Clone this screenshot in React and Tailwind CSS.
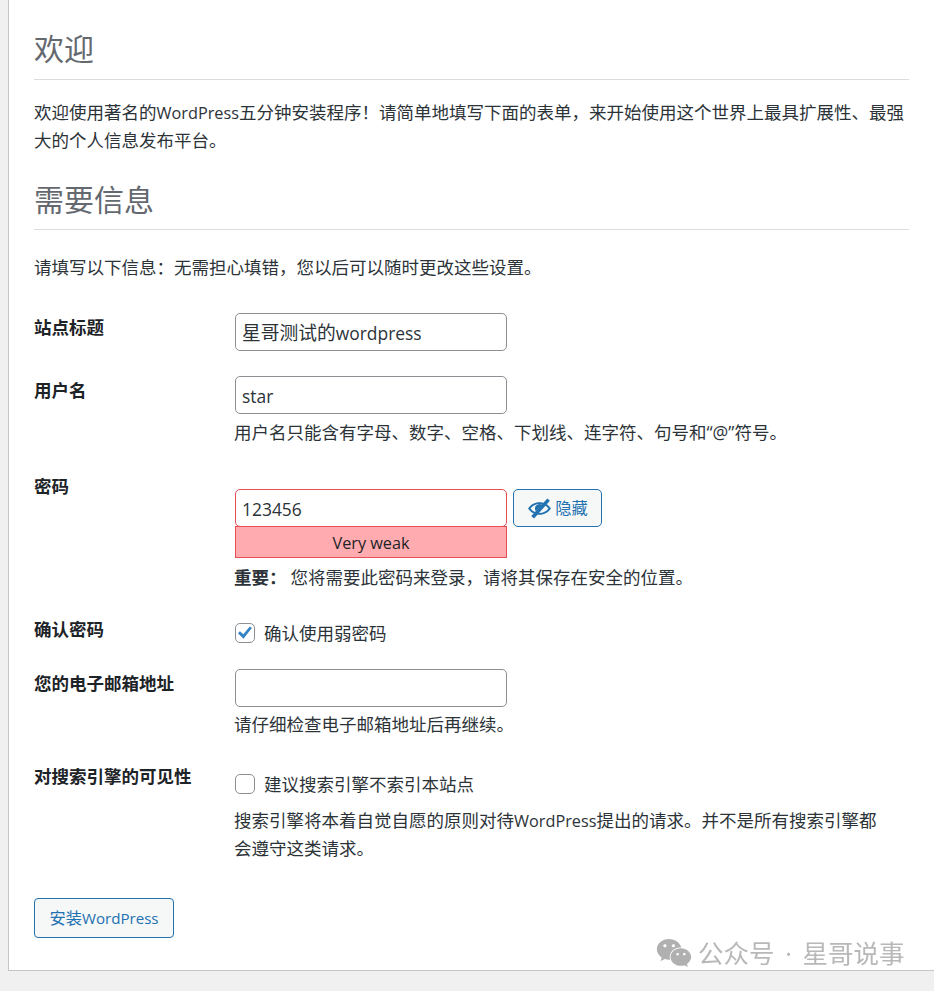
import { FaWeixin } from 'react-icons/fa';

// Latin runs sit a bit smaller than the CJK around them
function L({ children }) {
  return <span className="text-[0.93em]">{children}</span>;
}

function Row({ label, className = '', labelClass = '', children }) {
  return (
    <div className={`grid grid-cols-[200px_1fr] ${className}`}>
      <div className={`font-semibold text-[17.5px] leading-[26px] text-[#1d2327] ${labelClass}`}>{label}</div>
      <div>{children}</div>
    </div>
  );
}

function TextBox({ children, danger }) {
  return (
    <div className={`w-[272px] h-[38px] ml-px bg-white border rounded-[5px] px-[6px] text-[18.75px] leading-[37px] text-[#2c3338] ${danger ? 'border-[#e65054]' : 'border-[#8c8f94]'}`}>
      {children}
    </div>
  );
}

function Checkbox({ checked }) {
  return (
    <span className="flex items-center justify-center w-5 h-5 ml-px border border-[#8c8f94] rounded-[5px] bg-white shrink-0">
      {checked && (
        <svg viewBox="0 0 20 20" className="w-5 h-5 shrink-0">
          <path d="M3 10.200 L4.900 8.200 L8.300 11.300 L14.800 3.400 L16.900 5 L8.500 15.800 Z" fill="#3582c4" />
        </svg>
      )}
    </span>
  );
}

function EyeSlash() {
  return (
    <svg viewBox="0 0 24 24" className="w-[25px] h-[25px]" fill="#2271b1">
      <path
        fillRule="evenodd"
        d="M12 6c4.600 0 8.700 2.400 11 6-2.300 3.600-6.400 6-11 6S3.300 15.600 1 12C3.300 8.400 7.400 6 12 6Zm0 1.700c-3.400 0-6.500 1.600-8.600 4.300 2.100 2.700 5.200 4.300 8.600 4.300s6.500-1.600 8.600-4.300C18.500 9.300 15.400 7.700 12 7.700Z"
      />
      <path d="M12 7.600a4.400 4.400 0 0 1 2.600.8l-6 6.300A4.400 4.400 0 0 1 12 7.600Z" />
      <path d="M19.500 2.400l2.500 2.200L6.800 21.500l-2.700-2.200Z" />
    </svg>
  );
}

export default function App() {
  return (
    <div
      className="w-[934px] h-[991px] overflow-hidden bg-[#f0f0f1] text-[#2c3338] relative"
      style={{ fontFamily: '"Open Sans", "Noto Sans CJK SC", sans-serif' }}
    >
      <div className="ml-2 h-[971px] bg-white border-l border-b border-[#c3c4c7] px-[25px]">
        <h1 className="pt-[29px] h-[80px] border-b border-[#dcdcde] text-[30px] leading-[40px] font-normal text-[#646970]">欢迎</h1>
        <p className="mt-[19px] text-[17.5px] leading-[27px]">
          欢迎使用著名的<L>WordPress</L>五分钟安装程序！请简单地填写下面的表单，来开始使用这个世界上最具扩展性、最强大的个人信息发布平台。
        </p>
        <h2 className="mt-[26px] h-[50px] border-b border-[#dcdcde] text-[30px] leading-[40px] font-normal text-[#646970]">需要信息</h2>
        <p className="mt-[24px] text-[17.5px] leading-[27px]">请填写以下信息：无需担心填错，您以后可以随时更改这些设置。</p>

        <Row label="站点标题" className="mt-[32px]" labelClass="pt-px">
          <TextBox>星哥测试的<L>wordpress</L></TextBox>
        </Row>

        <Row label="用户名" className="mt-[25px]" labelClass="pt-px">
          <TextBox><L>star</L></TextBox>
          <p className="mt-[5px] text-[17.5px] leading-[27px]">用户名只能含有字母、数字、空格、下划线、连字符、句号和“@”符号。</p>
        </Row>

        <Row label="密码" className="mt-[27px]">
          <div className="flex gap-[6px] items-start pt-[16px]">
            <div>
              <TextBox danger><L>123456</L></TextBox>
              <div className="w-[272px] h-[32px] ml-px -mt-px bg-[#ffabaf] border border-[#e65054] text-center text-[16.25px] leading-[32px] text-[#1d2327]">Very weak</div>
            </div>
            <button className="flex items-center justify-center gap-[3px] w-[89px] h-[38px] bg-[#f6f7f7] border border-[#2271b1] rounded-[5px] text-[16.25px] text-[#2271b1]">
              <EyeSlash />
              隐藏
            </button>
          </div>
          <p className="mt-[6px] text-[17.5px] leading-[27px]"><b className="font-semibold mr-[4px]">重要：</b>您将需要此密码来登录，请将其保存在安全的位置。</p>
        </Row>

        <Row label="确认密码" className="mt-[26px]" labelClass="mt-[-1px]">
          <label className="flex items-center gap-[9px] text-[17.5px] leading-[26px] pt-[3px]">
            <Checkbox checked />
            确认使用弱密码
          </label>
        </Row>

        <Row label="您的电子邮箱地址" className="mt-[23px]" labelClass="pt-px">
          <TextBox />
          <p className="mt-[4px] text-[17.5px] leading-[27px]">请仔细检查电子邮箱地址后再继续。</p>
        </Row>

        <Row label="对搜索引擎的可见性" className="mt-[26px]" labelClass="mt-[-1px]">
          <label className="flex items-center gap-[9px] text-[17.5px] leading-[26px] pt-[7px]">
            <Checkbox />
            建议搜索引擎不索引本站点
          </label>
          <p className="mt-[10px] w-[650px] text-[17.5px] leading-[27px]">
            搜索引擎将本着自觉自愿的原则对待<L>WordPress</L>提出的请求。并不是所有搜索引擎都会遵守这类请求。
          </p>
        </Row>

        <button className="block mt-[36px] w-[140px] h-[40px] bg-[#f6f7f7] border border-[#2271b1] rounded-[4px] text-[16.25px] text-[#2271b1]">
          安装<L>WordPress</L>
        </button>
      </div>

      {/* watermark */}
      <div className="absolute left-[656px] top-[935px] flex items-center text-[#b8b8b8] text-[25.5px] leading-[36px] blur-[0.4px]">
        <FaWeixin className="w-[36px] h-[36px] mr-[6px] text-[#b0b0b0]" />
        <span>公众号</span>
        <span className="w-[28px] text-center">·</span>
        <span>星哥说事</span>
      </div>
    </div>
  );
}
